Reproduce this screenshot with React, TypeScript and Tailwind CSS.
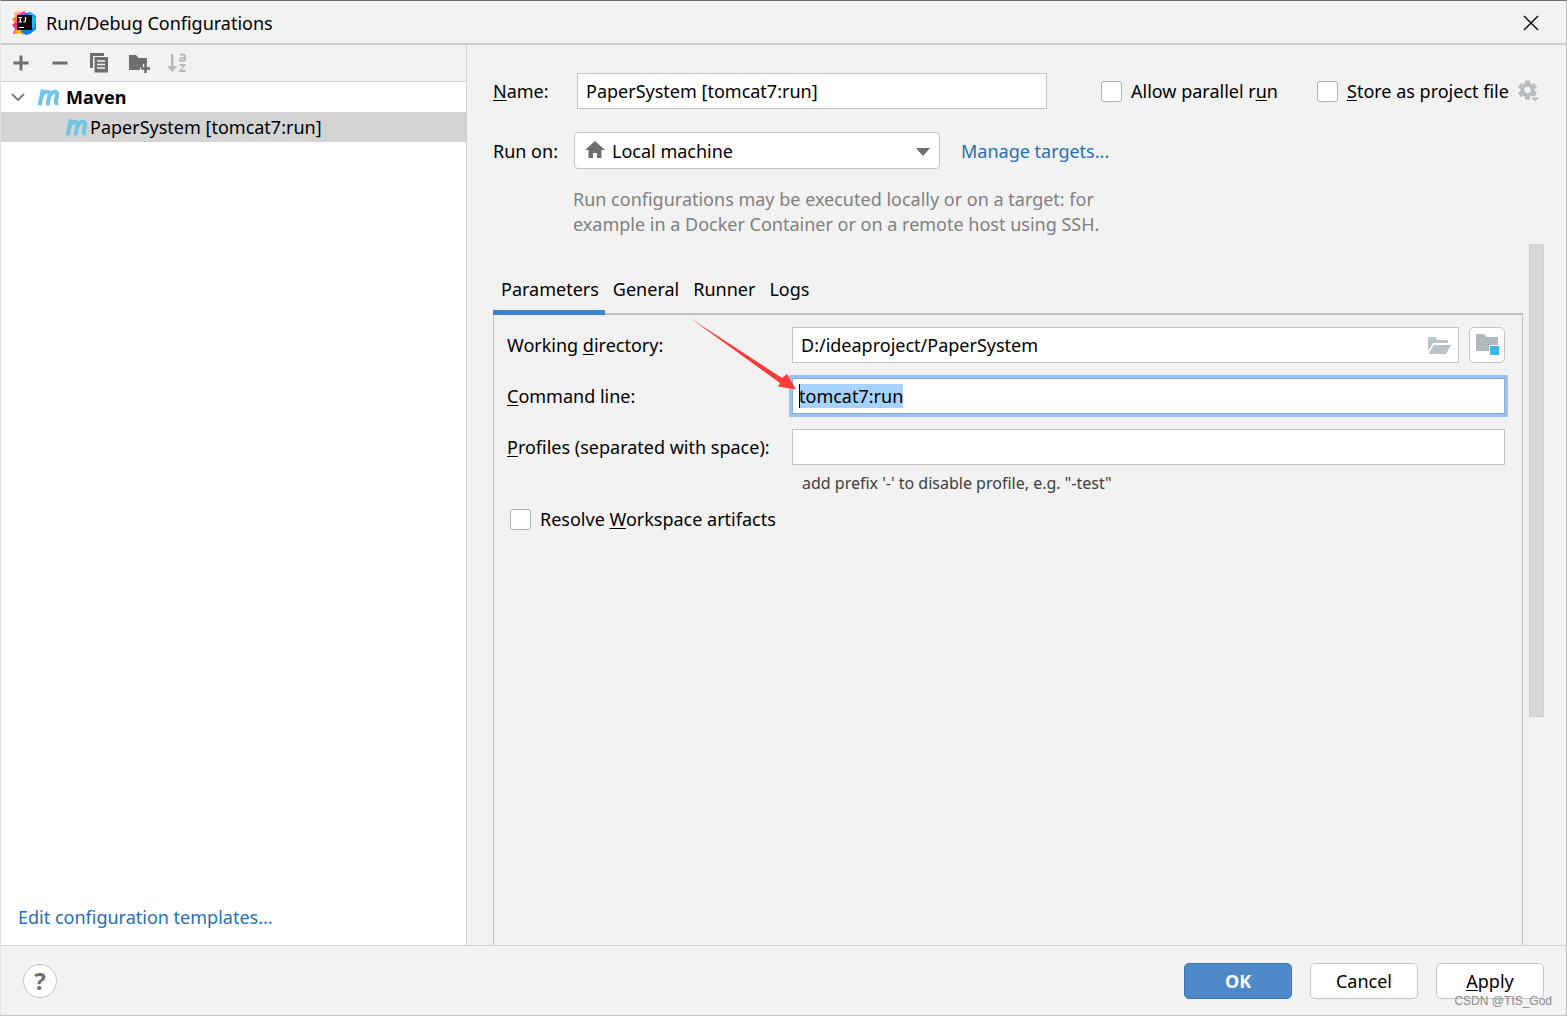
import { useEffect, useRef, type ReactNode } from "react";

function Key({ children }: { children: ReactNode }) {
  return <u className="underline decoration-1 underline-offset-2">{children}</u>;
}

function IdeaLogo() {
  return (
    <svg width="24" height="24" viewBox="0 0 24 24" aria-hidden="true">
      <path d="M2 1 6 0l6 3-2 6-7 1z" fill="#fdb98d" />
      <path d="M5 4l7-4 5 5-8 4z" fill="#fe2ec4" />
      <path d="M0 8l5-3 4 6-5 3z" fill="#fc801d" />
      <path d="M0 14l7-6v14l-6 1 2-5z" fill="#fe2d92" />
      <path d="M3 19l9-2 3 5-4 2-4-2-4 1z" fill="#fdb60d" />
      <path d="M12 3l6-2 6 4v13l-6 5-4 1-5-3z" fill="#087cfa" />
      <path d="M17 1l3 1 1 3 3 2-1 9-4 2z" fill="#21b7f5" />
      <rect x="5" y="4" width="15" height="15" fill="#0a0305" />
      <path d="M7 16.500h5M6.500 6.500h3.500M8.200 6.500v4.500M6.500 11h3.500M13.500 6v3.500q0 1.500-1.500 1.500h-.8" fill="none" stroke="#fff" strokeWidth="1.200" />
    </svg>
  );
}

function MavenIcon() {
  return (
    <svg width="25" height="18" viewBox="0 0 25 18" fill="none" stroke="#6fc6e6" strokeWidth="4" aria-hidden="true">
      <path d="M5.800 1.500 2.600 17.500" />
      <path d="M4.600 8.500C6 5.500 7.800 3.800 9.800 3.800c2.400 0 3 1.400 2.600 3.400L10.400 17.500" />
      <path d="M12.200 8.500c1.400-3.100 3-4.700 5.200-4.700 2.500 0 3 1.500 2.600 3.500l-1.300 6.200c-.3 1.700.5 2.200 2.500 1.900" />
    </svg>
  );
}

function AddIcon() {
  return (
    <svg width="16" height="16" viewBox="0 0 16 16" fill="none" stroke="#6e6e6e" strokeWidth="3" aria-hidden="true">
      <path d="M8 .5v15M.5 8h15" />
    </svg>
  );
}

function RemoveIcon() {
  return (
    <svg width="16" height="16" viewBox="0 0 16 16" fill="none" stroke="#6e6e6e" strokeWidth="3" aria-hidden="true">
      <path d="M.5 8h15" />
    </svg>
  );
}

function CopyIcon() {
  return (
    <svg width="20" height="22" viewBox="0 0 20 22" aria-hidden="true">
      <path d="M1 1h14v3H4v12H1z" fill="#6e6e6e" />
      <path d="M5.500 5H19v15.500H5.500z" fill="#6e6e6e" />
      <path d="M8 9h8M8 12.500h8M8 16h8" stroke="#f2f2f2" strokeWidth="1.500" />
    </svg>
  );
}

function FolderAddIcon() {
  return (
    <svg width="24" height="20" viewBox="0 0 24 20" aria-hidden="true">
      <path d="M3 2h7l2.500 3H21v6h-4v3.500h-3V17H3z" fill="#6e6e6e" />
      <path d="M19.500 11v9M15 15.500h9" stroke="#6e6e6e" strokeWidth="2.600" />
    </svg>
  );
}

function SortIcon() {
  return (
    <svg width="20" height="22" viewBox="0 0 20 22" fill="#b9b9b9" aria-hidden="true">
      <path d="M4 2h2.500v12h4l-5.200 6L0 14h4z" />
      <path d="M13 3.200q1.500-.8 3-.8 2 0 2 2v4.800M18 5.800h-2.500q-2.500 0-2.500 1.600t2 1.600q2 0 3-1.500M12.700 13h4.800l-4.500 6h5.500" fill="none" stroke="#b9b9b9" strokeWidth="1.800" />
    </svg>
  );
}

function HomeIcon() {
  return (
    <svg width="20" height="17" viewBox="0 0 20 17" fill="#6e6e6e" aria-hidden="true">
      <path d="M10 0l10 9h-3.500v8H12v-5H8v5H3.500V9H0z" />
    </svg>
  );
}

function GearIcon() {
  return (
    <svg width="22" height="22" viewBox="0 0 22 22" aria-hidden="true">
      <g fill="#b9bdc0">
        <circle cx="9.500" cy="10" r="7.200" />
        <path d="M7 .5h5v19H7z" />
        <path d="M7 .5h5v19H7z" transform="rotate(60 9.500 10)" />
        <path d="M7 .5h5v19H7z" transform="rotate(120 9.500 10)" />
      </g>
      <circle cx="9.500" cy="10" r="3.200" fill="#f2f2f2" />
      <path d="M12 17h10l-5 5z" fill="#b9bdc0" stroke="#f2f2f2" />
    </svg>
  );
}

function OpenFolderIcon() {
  return (
    <svg width="23" height="17" viewBox="0 0 23 17" fill="#bcc2c6" aria-hidden="true">
      <path d="M0 0h7.500l2 3H20v3H5L0 14z" />
      <path d="M5.500 8H23l-5 9H.5z" />
    </svg>
  );
}

function ModuleFolderIcon() {
  return (
    <svg width="23" height="22" viewBox="0 0 23 22" aria-hidden="true">
      <path d="M0 0h8l3 3h11v8h-9v6H0z" fill="#afb9bf" />
      <path d="M14 12h9v9h-9z" fill="#40b6e0" />
    </svg>
  );
}

function ToolButton({ label, disabled, children }: { label: string; disabled?: boolean; children: ReactNode }) {
  return (
    <button type="button" aria-label={label} disabled={disabled} className="flex h-9 w-[39px] items-center justify-center">
      {children}
    </button>
  );
}

function Check({ id, children }: { id: string; children: ReactNode }) {
  return (
    <div className="flex items-center gap-[9px]">
      <input
        id={id}
        type="checkbox"
        className="size-[21px] shrink-0 appearance-none rounded-[3px] border border-[#b0b0b0] bg-white checked:bg-[#4083c9]"
      />
      <label htmlFor={id} className="whitespace-nowrap">{children}</label>
    </div>
  );
}

function Sidebar() {
  return (
    <aside className="flex w-[466px] shrink-0 flex-col border-r border-[#d1d1d1] bg-white">
      <div className="flex h-[37px] border-b border-[#d1d1d1] bg-[#f2f2f2]">
        <ToolButton label="Add new configuration"><AddIcon /></ToolButton>
        <ToolButton label="Remove configuration"><RemoveIcon /></ToolButton>
        <ToolButton label="Copy configuration"><CopyIcon /></ToolButton>
        <ToolButton label="Create new folder"><FolderAddIcon /></ToolButton>
        <ToolButton label="Sort configurations" disabled><SortIcon /></ToolButton>
      </div>
      <ul role="tree" aria-label="Configurations" className="flex-1">
        <li role="treeitem" aria-expanded="true">
          <div className="flex h-[30px] items-center pl-[10px] font-bold">
            <svg width="14" height="8" viewBox="0 0 14 8" fill="none" stroke="#7f7f7f" strokeWidth="2" aria-hidden="true">
              <path d="M1 1l6 6 6-6" />
            </svg>
            <span className="ml-3 mr-1"><MavenIcon /></span>
            Maven
          </div>
          <ul role="group">
            <li role="treeitem" aria-selected="true" className="flex h-[30px] items-center bg-[#d4d4d4] pl-16">
              <MavenIcon />
              PaperSystem [tomcat7:run]
            </li>
          </ul>
        </li>
      </ul>
      <a href="#templates" className="mb-4 ml-[17px] self-start text-[#2470b3]">Edit configuration templates...</a>
    </aside>
  );
}

const fieldClass = "h-9 border border-[#c4c4c4] bg-white px-2 outline-none";
const tabs = ["Parameters", "General", "Runner", "Logs"];

function ParametersPanel() {
  const commandRef = useRef<HTMLInputElement>(null);

  useEffect(() => {
    commandRef.current?.focus();
    commandRef.current?.select();
  }, []);

  return (
    <div role="tabpanel" className="relative flex-1 border-x border-[#c4c4c4] pl-[13px] pr-[17px] pt-3">
      <div className="grid grid-cols-[285px_1fr] items-center gap-y-[15px]">
        <label htmlFor="workdir">Working <Key>d</Key>irectory:</label>
        <div className="flex gap-[10px]">
          <div className="relative flex-1">
            <input id="workdir" defaultValue="D:/ideaproject/PaperSystem" className={`${fieldClass} w-full pr-10`} />
            <button type="button" aria-label="Browse" className="absolute right-2 top-[10px]"><OpenFolderIcon /></button>
          </div>
          <button
            type="button"
            aria-label="Select Maven module"
            className="flex size-9 items-center justify-center rounded-[5px] border border-[#c4c4c4] bg-white"
          >
            <ModuleFolderIcon />
          </button>
        </div>

        <label htmlFor="command"><Key>C</Key>ommand line:</label>
        <div className="relative flex">
          <input
            id="command"
            ref={commandRef}
            defaultValue="tomcat7:run"
            className="h-9 w-full border border-[#87afda] bg-white px-[6px] outline-3 outline-[#97c3f3] selection:bg-[#a6d2ff] selection:text-black"
          />
          <span className="absolute left-[7px] top-[6px] h-6 w-px bg-black" />
        </div>

        <label htmlFor="profiles"><Key>P</Key>rofiles (separated with space):</label>
        <input id="profiles" className={fieldClass} />
      </div>
      <p className="ml-[295px] mt-[6px] text-base text-[#404040]">add prefix '-' to disable profile, e.g. "-test"</p>
      <div className="ml-[3px] mt-3">
        <Check id="resolve">Resolve <Key>W</Key>orkspace artifacts</Check>
      </div>
      <svg className="pointer-events-none absolute left-[196px] top-[3px]" width="108" height="74" viewBox="0 0 108 74" aria-hidden="true">
        <path d="M0 0 92 60l5-4 9 15.500-18-3 2-3.500z" fill="#fb3b3b" />
      </svg>
    </div>
  );
}

function Editor() {
  return (
    <main className="flex min-w-0 flex-1 flex-col pl-[26px]">
      <div className="mt-7 flex h-9 items-center">
        <label htmlFor="name" className="w-[84px]"><Key>N</Key>ame:</label>
        <input id="name" defaultValue="PaperSystem [tomcat7:run]" className={`${fieldClass} min-w-0 flex-1`} />
        <div className="ml-[54px] w-[216px]">
          <Check id="parallel">Allow parallel r<Key>u</Key>n</Check>
        </div>
        <div className="w-[195px]">
          <Check id="store"><Key>S</Key>tore as project file</Check>
        </div>
        <button type="button" aria-label="Storage options" className="ml-[6px] mr-[26px]"><GearIcon /></button>
      </div>
      <div className="mt-[23px] flex items-center">
        <label htmlFor="target" className="w-[81px]">Run on:</label>
        <div className="relative w-[366px]">
          <select id="target" className="block h-[37px] w-full appearance-none rounded-[4px] border border-[#c4c4c4] bg-white pl-[37px] outline-none">
            <option>Local machine</option>
          </select>
          <span className="pointer-events-none absolute left-[11px] top-[9px]"><HomeIcon /></span>
          <svg className="pointer-events-none absolute right-[10px] top-4" width="14" height="8" viewBox="0 0 14 8" aria-hidden="true">
            <path d="M0 0h14L7 8z" fill="#6e6e6e" />
          </svg>
        </div>
        <a href="#targets" className="ml-[21px] text-[#2470b3]">Manage targets...</a>
      </div>
      <p className="ml-20 mt-[18px] w-[550px] leading-[25px] text-[#808080]">
        Run configurations may be executed locally or on a target: for example in a Docker Container or on a remote host using SSH.
      </p>

      <div className="mt-[7px] flex flex-1 pr-[22px]">
        <div className="flex min-w-0 flex-1 flex-col pt-[23px]">
          <div role="tablist" className="flex h-12 border-b-2 border-[#c0c0c0]">
            {tabs.map((tab) => (
              <button
                key={tab}
                type="button"
                role="tab"
                aria-selected={tab === "Parameters"}
                className="-mb-[2px] border-b-5 border-transparent pl-2 pr-[6px] aria-selected:border-[#4083c9]"
              >
                {tab}
              </button>
            ))}
          </div>
          <ParametersPanel />
        </div>
        <div className="ml-[6px] h-[473px] w-[15px] border border-[#cfcfcf] bg-[#d8d8d8]" />
      </div>
    </main>
  );
}

const buttonClass = "h-9 w-[108px] rounded-[5px] border";

export default function App() {
  return (
    <div className="relative flex min-h-screen flex-col border border-t-[#6e6e6e] border-r-[#c0c0c0] border-b-[#c8c8c8] border-l-[#e4e4e4] bg-[#f2f2f2] font-['Noto_Sans',sans-serif] text-[18px] leading-6 text-black">
      <header className="flex h-11 items-center border-b-2 border-[#cdcdcd] pl-[11px] pr-[27px] pt-px">
        <IdeaLogo />
        <h1 className="ml-[10px] flex-1">Run/Debug Configurations</h1>
        <button type="button" aria-label="Close">
          <svg width="16" height="16" viewBox="0 0 16 16" fill="none" stroke="#111" strokeWidth="1.500" aria-hidden="true">
            <path d="M1 1l14 14M15 1 1 15" />
          </svg>
        </button>
      </header>
      <div className="flex flex-1">
        <Sidebar />
        <Editor />
      </div>
      <footer className="flex h-[70px] items-center gap-[18px] border-t border-[#d1d1d1] px-[22px]">
        <button
          type="button"
          aria-label="Help"
          className="mr-auto flex size-[34px] items-center justify-center rounded-full border border-[#c4c4c4] bg-white text-2xl font-bold text-[#6e6e6e]"
        >
          ?
        </button>
        <button type="button" className={`${buttonClass} border-[#3d75b5] bg-[#4d89c9] font-bold text-white`}>OK</button>
        <button type="button" className={`${buttonClass} border-[#c4c4c4] bg-white`}>Cancel</button>
        <button type="button" className={`${buttonClass} border-[#c4c4c4] bg-white`}><Key>A</Key>pply</button>
      </footer>
      <span className="absolute bottom-[6px] right-[14px] font-['Liberation_Sans',sans-serif] text-xs text-[#8a8a8a]">CSDN @TIS_God</span>
    </div>
  );
}
